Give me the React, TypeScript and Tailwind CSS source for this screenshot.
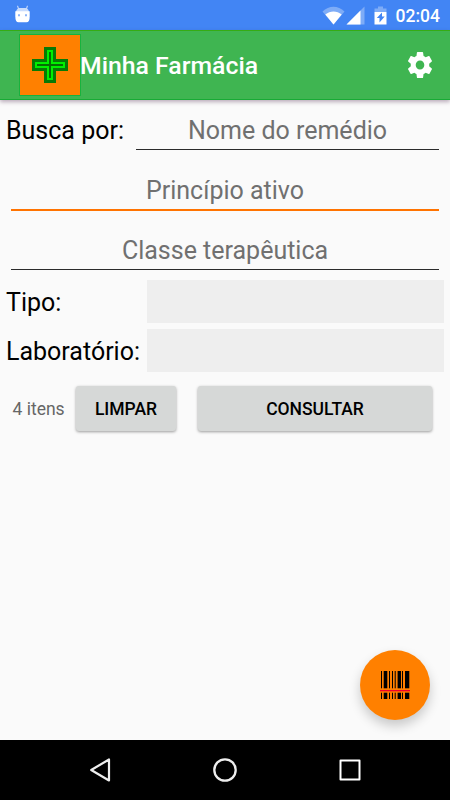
import type { ReactNode } from "react";

const bars = [
  { x: 1, w: 1 },
  { x: 3.7, w: 3.6 },
  { x: 9, w: 1 },
  { x: 12, w: 1 },
  { x: 14.7, w: 1 },
  { x: 17.6, w: 3.4 },
  { x: 22, w: 1 },
  { x: 25, w: 4.3 },
];

function StatusBar() {
  return (
    <div className="flex h-[30px] items-center justify-between bg-[#4285f4] pl-[15px] pr-[10px]">
      <svg width="15" height="18" viewBox="0 0 15 18" className="mb-[3px]">
        <path d="M3.5 4 2.6.8M11.5 4l.9-3.2" stroke="#fff" strokeOpacity=".8" strokeWidth="1" />
        <path d="M1 7c.5-3 2-4 3.500-4h6c1.500 0 3 1 3.500 4Z" fill="#c9dcfc" />
        <path d="M.3 6.300h14.400v5c0 4-1 6-3.200 6h-8c-2.200 0-3.200-2-3.200-6Z" fill="#fff" />
        <path d="M3 9.200h2v2H3zM10 9.200h2v2h-2z" fill="#8db5f9" />
      </svg>
      <div className="flex items-center text-white">
        <svg width="66" height="19" viewBox="0 0 66 19" className="mr-[8px]">
          <path d="M0.500 5.500C7-.8 16-.8 22.500 5.500L11.500 18.500Z" fill="#fff" fillOpacity=".32" />
          <path d="M3.300 8.500c5-4 11.400-4 16.400 0L11.500 18.500Z" fill="#fff" />
          <path d="M24.500 18.500 42.500.5v18Z" fill="#fff" fillOpacity=".32" />
          <path d="M24.500 18.500 38.500 4.500v14Z" fill="#fff" />
          <path d="M52.500 6V2.500h3.500v-2h5v2h3.500V6Z" fill="#fff" fillOpacity=".32" />
          <path d="M52.500 6h12v12.500h-12Z" fill="#fff" />
          <path d="M60 6.500v4h2.700L57.500 16.500v-4.500h-2.700Z" fill="#4285f4" />
        </svg>
        <span className="pt-[2px] text-[17.5px] leading-[28px] font-medium">02:04</span>
      </div>
    </div>
  );
}

function Toolbar() {
  return (
    <header className="relative z-10 flex h-[70px] items-center border-y border-t-[#35ac14] border-b-[#18aa35] bg-[#3fb551] pr-[18px] pl-[19px] shadow-[0_2px_4px_rgba(70,30,70,0.35)]">
      <div className="flex h-[62px] w-[62px] items-center justify-center border border-[#18b23e] bg-[#ff8000]">
        <svg width="36" height="36" viewBox="0 0 36 36">
          <path d="M12 0h12v12h12v12H24v12H12V24H0V12h12Z" fill="#067a06" />
          <path
            d="M16 4h4v12h12v4H20v12h-4V20H4v-4h12Z"
            fill="#056c05"
            stroke="#00f000"
            strokeWidth="2"
          />
        </svg>
      </div>
      <h1 className="-ml-px flex-1 pt-[2px] text-[24.8px] leading-[30px] font-medium text-white">Minha Farmácia</h1>
      <button type="button" aria-label="Configurações">
        <svg width="24" height="26" viewBox="2.270 2 19.460 20" preserveAspectRatio="none" fill="#fff">
          <path d="M19.430 12.980c.04-.32.070-.64.070-.98s-.03-.66-.07-.98l2.110-1.650c.19-.15.24-.42.120-.64l-2-3.460c-.12-.22-.39-.3-.61-.22l-2.490 1c-.52-.4-1.080-.73-1.690-.98l-.38-2.650C14.460 2.180 14.250 2 14 2h-4c-.25 0-.46.18-.49.42l-.38 2.650c-.61.25-1.170.59-1.690.98l-2.490-1c-.23-.09-.49 0-.61.22l-2 3.460c-.13.22-.07.49.12.64l2.110 1.650c-.04.32-.07.65-.07.98s.03.66.07.98l-2.110 1.650c-.19.15-.24.42-.12.64l2 3.460c.12.22.39.3.61.22l2.490-1c.52.4 1.080.73 1.690.98l.38 2.650c.03.24.24.42.49.42h4c.25 0 .46-.18.49-.42l.38-2.650c.61-.25 1.170-.59 1.690-.98l2.490 1c.23.09.49 0 .61-.22l2-3.460c.12-.22.070-.49-.12-.64l-2.110-1.650zM12 15.500c-1.930 0-3.500-1.570-3.500-3.500s1.570-3.500 3.500-3.500 3.500 1.570 3.500 3.500-1.570 3.500-3.500 3.500z" />
        </svg>
      </button>
    </header>
  );
}

function Field({ hint, active = false }: { hint: string; active?: boolean }) {
  return (
    <input
      placeholder={hint}
      className={`h-[41px] w-full min-w-0 flex-1 bg-transparent text-center text-[25px] text-black outline-none placeholder:text-[#707070] ${
        active ? "border-b-2 border-[#ff7300] pt-[2px]" : "border-b border-[#2b2b2b] pt-[3px]"
      }`}
    />
  );
}

function SelectRow({ label }: { label: string }) {
  return (
    <div className="flex h-[43px] items-center pr-[6px]">
      <span className="w-[141px] pt-px text-[25px] leading-[43px] whitespace-nowrap">{label}</span>
      <div className="h-full flex-1 bg-[#eeeeee]" />
    </div>
  );
}

function RaisedButton({ className, children }: { className: string; children: ReactNode }) {
  return (
    <button
      type="button"
      className={`h-[45px] rounded-[3px] bg-[#d6d8d7] pt-px text-[17.5px] font-medium text-black shadow-[0_1px_3px_rgba(0,0,0,0.38)] ${className}`}
    >
      {children}
    </button>
  );
}

function ScanButton() {
  return (
    <button
      type="button"
      aria-label="Ler código de barras"
      className="absolute right-[20px] bottom-[20px] flex h-[70px] w-[70px] items-center justify-center rounded-full bg-[#ff8000] shadow-[0_6px_12px_rgba(0,0,0,0.2)]"
    >
      <svg width="30" height="28" viewBox="0 0 30 28">
        {bars.map((bar) => (
          <g key={bar.x}>
            <rect x={bar.x} y="0" width={bar.w} height="17.300" />
            <rect x={bar.x} y="21.700" width={bar.w} height="6.300" />
          </g>
        ))}
        <rect y="19" width="30" height="1.300" fill="#f0002c" />
      </svg>
    </button>
  );
}

function NavigationBar() {
  return (
    <nav className="flex h-[60px] items-center justify-between bg-black px-[88px]">
      <svg width="24" height="26" viewBox="0 0 24 26" fill="none" stroke="#eee" strokeWidth="2.200" strokeLinejoin="round">
        <path d="M21 2.500v21L3.200 13Z" />
      </svg>
      <svg width="26" height="26" viewBox="0 0 26 26" fill="none" stroke="#eee" strokeWidth="2.300">
        <circle cx="13" cy="13" r="10.700" />
      </svg>
      <svg width="24" height="26" viewBox="0 0 24 26" fill="none" stroke="#fff" strokeWidth="2" strokeLinejoin="round">
        <rect x="2.500" y="3.500" width="19" height="19" />
      </svg>
    </nav>
  );
}

export default function App() {
  return (
    <div className="flex h-[800px] w-[450px] flex-col overflow-hidden bg-[#fafafa] font-['Roboto',sans-serif] text-black">
      <StatusBar />
      <Toolbar />

      <main className="relative flex-1">
        <div className="flex h-[50px] items-end pr-[11px] pl-[6px]">
          <label className="w-[130px] text-[25px] leading-[39px] whitespace-nowrap">Busca por:</label>
          <Field hint="Nome do remédio" />
        </div>
        <div className="mt-[20px] flex px-[11px]">
          <Field hint="Princípio ativo" active />
        </div>
        <div className="mt-[18px] flex px-[11px]">
          <Field hint="Classe terapêutica" />
        </div>

        <div className="mt-[10px] flex flex-col gap-[6px] pl-[6px]">
          <SelectRow label="Tipo:" />
          <SelectRow label="Laboratório:" />
        </div>

        <div className="mt-[14px] flex items-center pr-[18px] pl-[12.5px]">
          <span className="w-[63.5px] pt-px text-[17.5px] whitespace-nowrap text-[#666]">4 itens</span>
          <RaisedButton className="w-[100px]">LIMPAR</RaisedButton>
          <RaisedButton className="ml-[22px] flex-1">CONSULTAR</RaisedButton>
        </div>

        <ScanButton />
      </main>

      <NavigationBar />
    </div>
  );
}
